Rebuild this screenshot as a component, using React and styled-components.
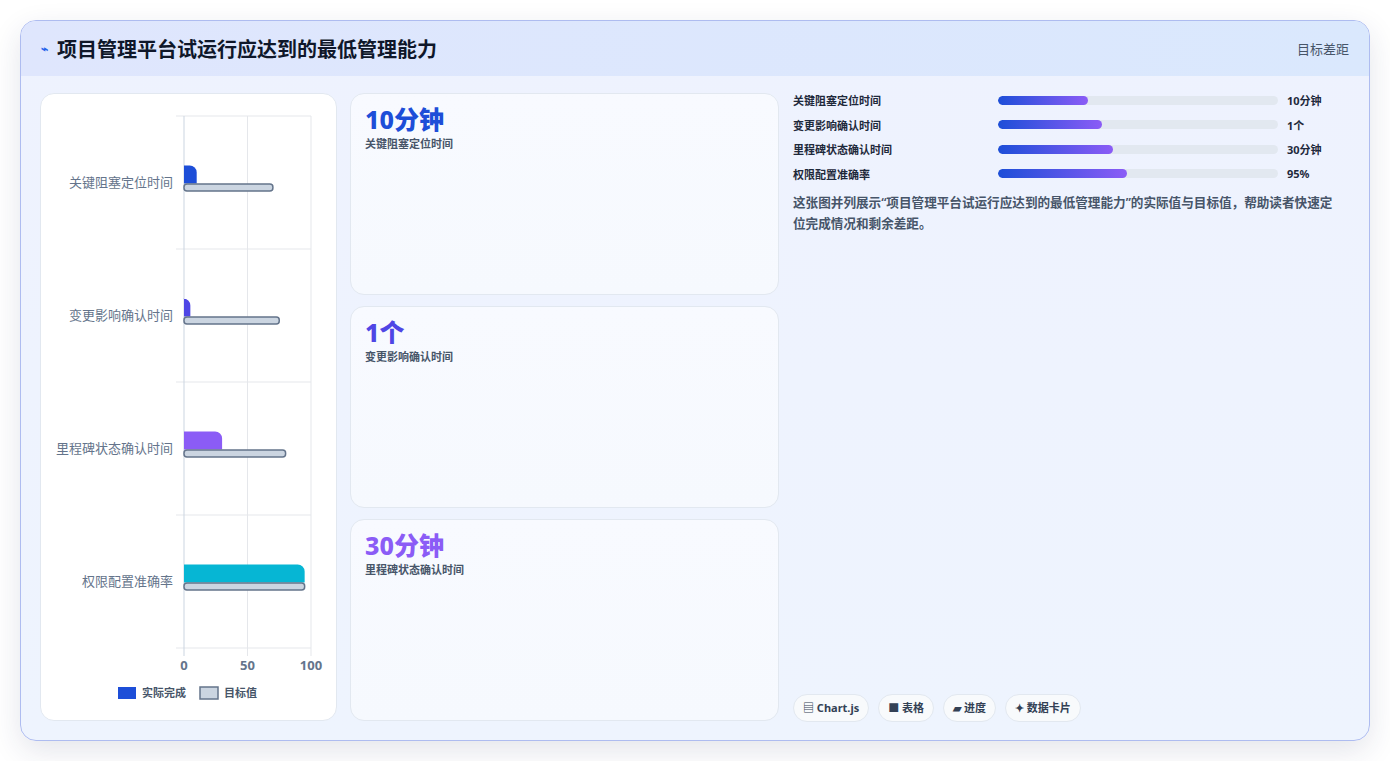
import React from "react";
import styled, { createGlobalStyle } from "styled-components";

const Global = createGlobalStyle`
  body { margin: 0; background: #fff; font-family: "Noto Sans", "Noto Sans CJK SC", sans-serif; }
`;

const Page = styled.div`
  padding: 20px;
  height: 761px; box-sizing: border-box;
`;
const Frame = styled.div`
  height: 721px; box-sizing: border-box;
  border: 1px solid #aebcf0; border-radius: 16px; overflow: hidden;
  background: linear-gradient(180deg, #eef2fe 0%, #eef4fe 100%);
  box-shadow: 0 10px 30px rgba(30, 41, 90, 0.12);
  display: flex; flex-direction: column;
`;
const Header = styled.div`
  height: 55px; flex: none; display: flex; align-items: center; justify-content: space-between;
  padding: 0 20px; background: linear-gradient(90deg, #dfe6fd, #dae8fd);
`;
const Title = styled.h1`
  margin: 0; font-size: 20px; font-weight: 700; color: #0f172a; display: flex; align-items: center; gap: 9px;
`;
const Sub = styled.span` font-size: 13px; color: #475569; `;
const Body = styled.div`
  flex: 1; min-height: 0; display: grid; grid-template-columns: 297px 429px 1fr; gap: 13px;
  padding: 17px 19px 19px 19px;
`;
const ChartCard = styled.div`
  background: #fff; border: 1px solid #e2e8f0; border-radius: 14px; overflow: hidden;
`;
const Mid = styled.div` display: grid; grid-template-rows: 1fr 1fr 1fr; gap: 11px; min-height: 0; `;
const StatCard = styled.div`
  background: linear-gradient(180deg, #f8faff, #f6f9fe); border: 1px solid #e2e8f0; border-radius: 14px;
  padding: 9px 14px;
`;
const StatValue = styled.div` font-size: 25px; font-weight: 800; color: ${p => p.c}; line-height: 32px; `;
const StatLabel = styled.div` font-size: 11px; font-weight: 600; color: #475569; `;
const Right = styled.div` display: flex; flex-direction: column; margin-top: -5px; padding-left: 1px; min-height: 0; `;
const Row = styled.div`
  display: grid; grid-template-columns: 196px 280px 1fr; align-items: center; gap: 9px; height: 24.5px;
`;
const RowLabel = styled.span` font-size: 11px; font-weight: 600; color: #1e293b; `;
const Track = styled.div` height: 9px; border-radius: 5px; background: #e2e8f0; overflow: hidden; `;
const Fill = styled.div` height: 100%; border-radius: 5px; background: linear-gradient(90deg, #1d4ed8, #8b5cf6); `;
const RowVal = styled.span` font-size: 11px; font-weight: 700; color: #1e293b; `;
const Desc = styled.p`
  margin: 6px 0 0; max-width: 550px; font-size: 12.6px; font-weight: 600; line-height: 21px; color: #475569;
`;
const Tags = styled.div` margin-top: auto; display: flex; gap: 9px; margin-bottom: -1px; `;
const Tag = styled.span`
  font-size: 11px; font-weight: 700; color: #334155; background: #f8fafc; border: 1px solid #e2e8f0;
  border-radius: 14px; padding: 6px 9px; line-height: 14px;
`;

const cats = [
  { n: "关键阻塞定位时间", a: 10, t: 70, c: "#1d4ed8" },
  { n: "变更影响确认时间", a: 5, t: 75, c: "#4f46e5" },
  { n: "里程碑状态确认时间", a: 30, t: 80, c: "#8b5cf6" },
  { n: "权限配置准确率", a: 95, t: 95, c: "#06b6d4" },
];

function Chart() {
  const x0 = 143, w = 127, y0 = 22, band = 133;
  const sx = v => x0 + (v / 100) * w;
  return (
    <svg width="297" height="627" viewBox="0 0 297 627">
      {[0, 1, 2, 3, 4].map(i => (
        <line key={i} x1={x0 - 8} x2={x0 + w} y1={y0 + i * band} y2={y0 + i * band} stroke="#e5e7eb" />
      ))}
      {[0, 50, 100].map(v => (
        <line key={v} x1={sx(v)} x2={sx(v)} y1={y0} y2={y0 + 4 * band + 8} stroke={v === 0 ? "#cbd5e1" : "#e5e7eb"} />
      ))}
      {cats.map((c, i) => {
        const cy = y0 + i * band + band / 2;
        return (
          <g key={i}>
            <text x={x0 - 11} y={cy + 4} textAnchor="end" fontSize="13" fill="#64748b">{c.n}</text>
            <path d={`M${x0} ${cy - 17} H${sx(c.a) - 7} a7 7 0 0 1 7 7 V${cy + 1} H${x0} Z`} fill={c.c} />
            <rect x={x0} y={cy + 1.5} width={sx(c.t) - x0} height={7} rx={3} fill="#cbd5e1" stroke="#64748b" strokeWidth="1.5" />
          </g>
        );
      })}
      {[0, 50, 100].map(v => (
        <text key={v} x={sx(v)} y={576} textAnchor="middle" fontSize="13" fontWeight="700" fill="#64748b">{v}</text>
      ))}
      <rect x={77} y={593} width={18} height={12} fill="#1d4ed8" />
      <text x={101} y={603} fontSize="11" fontWeight="600" fill="#475569">实际完成</text>
      <rect x={159} y={593} width={18} height={12} fill="#cbd5e1" stroke="#64748b" strokeWidth="1.5" />
      <text x={183} y={603} fontSize="11" fontWeight="600" fill="#475569">目标值</text>
    </svg>
  );
}

export default function App() {
  return (
    <Page>
      <Global />
      <Frame>
        <Header>
          <Title><span style={{ color: "#2563eb", fontSize: 12 }}>⌁</span>项目管理平台试运行应达到的最低管理能力</Title>
          <Sub>目标差距</Sub>
        </Header>
        <Body>
          <ChartCard><Chart /></ChartCard>
          <Mid>
            <StatCard><StatValue c="#1d4ed8">10分钟</StatValue><StatLabel>关键阻塞定位时间</StatLabel></StatCard>
            <StatCard><StatValue c="#4f46e5">1个</StatValue><StatLabel>变更影响确认时间</StatLabel></StatCard>
            <StatCard><StatValue c="#8b5cf6">30分钟</StatValue><StatLabel>里程碑状态确认时间</StatLabel></StatCard>
          </Mid>
          <Right>
            {[["关键阻塞定位时间", 32, "10分钟"], ["变更影响确认时间", 37, "1个"], ["里程碑状态确认时间", 41, "30分钟"], ["权限配置准确率", 46, "95%"]].map(([n, p, v]) => (
              <Row key={n}>
                <RowLabel>{n}</RowLabel>
                <Track><Fill style={{ width: p + "%" }} /></Track>
                <RowVal>{v}</RowVal>
              </Row>
            ))}
            <Desc>这张图并列展示“项目管理平台试运行应达到的最低管理能力”的实际值与目标值，帮助读者快速定位完成情况和剩余差距。</Desc>
            <Tags>
              <Tag>▤ Chart.js</Tag>
              <Tag>■ 表格</Tag>
              <Tag>▰ 进度</Tag>
              <Tag>✦ 数据卡片</Tag>
            </Tags>
          </Right>
        </Body>
      </Frame>
    </Page>
  );
}
